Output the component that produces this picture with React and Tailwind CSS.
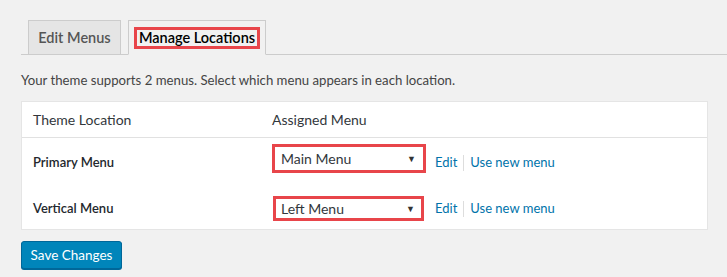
export default function App() {
  const font = { fontFamily: 'Lato, "Open Sans", sans-serif' };
  const Links = ({ first }) => (
    <>
      <a className={`${first} text-[13px] text-[#0073aa] self-center`}>Edit</a>
      <span className="ml-[6px] mr-[6px] w-px h-[16px] bg-[#ddd] self-center" />
      <a className="text-[13px] text-[#0073aa] self-center">Use new menu</a>
    </>
  );
  return (
    <div className="w-[727px] h-[277px] bg-[#f1f1f1] overflow-hidden" style={font}>
      <div className="pt-[20px] pl-[21px]">
        <div className="flex items-end gap-[7px] pl-[7px] border-b border-[#ccc] h-[35px]">
          <div className="h-[35px] -mb-px w-[93px] flex items-center justify-center bg-[#e5e5e5] border border-[#ccc] text-[14.5px] font-semibold text-[#555]">
            Edit Menus
          </div>
          <div className="h-[35px] -mb-px w-[138px] flex items-center justify-center bg-[#f1f1f1] border border-[#ccc] border-b-[#f1f1f1]">
            <span className="border-[3px] border-[#e8454a] w-[126px] h-[22px] flex items-center justify-center text-[14.5px] font-semibold text-black">
              Manage Locations
            </span>
          </div>
        </div>
        <p className="mt-[16px] text-[13.2px] text-[#444] leading-[18px]">
          Your theme supports 2 menus. Select which menu appears in each location.
        </p>
        <div className="mt-[12px] w-[687px] bg-white border border-[#e5e5e5]">
          <div className="flex items-center h-[36px] border-b border-[#e1e1e1] text-[14px] text-[#32373c]">
            <div className="w-[250px] pl-[11px]">Theme Location</div>
            <div>Assigned Menu</div>
          </div>
          <div className="flex items-center h-[50px]">
            <div className="w-[250px] pl-[11px] text-[13px] font-semibold text-[#23282d]">Primary Menu</div>
            <div className="flex items-start h-full">
              <div className="mt-[6px] w-[154px] h-[29px] border-[3px] border-[#e8454a] bg-white flex items-center justify-between pl-[6px] pr-[7px]">
                <span className="text-[14px] text-[#32373c]">Main Menu</span>
                <span className="text-[9px] text-[#333]">▼</span>
              </div>
              <Links first="ml-[9px]" />
            </div>
          </div>
          <div className="flex items-center h-[41px]">
            <div className="w-[250px] pl-[11px] text-[13px] font-semibold text-[#23282d]">Vertical Menu</div>
            <div className="flex items-center">
              <div className="ml-[1px] w-[151px] h-[25px] border-[3px] border-[#e8454a] bg-white flex items-center justify-between pl-[5px] pr-[6px]">
                <span className="text-[14px] text-[#32373c]">Left Menu</span>
                <span className="text-[9px] text-[#333]">▼</span>
              </div>
              <Links first="ml-[11px]" />
            </div>
          </div>
        </div>
        <button className="mt-[11px] h-[28px] w-[101px] rounded-[3px] bg-[#0085ba] border border-[#006799] text-white text-[13.5px] shadow-[0_1px_0_#006799]">
          Save Changes
        </button>
      </div>
    </div>
  );
}
